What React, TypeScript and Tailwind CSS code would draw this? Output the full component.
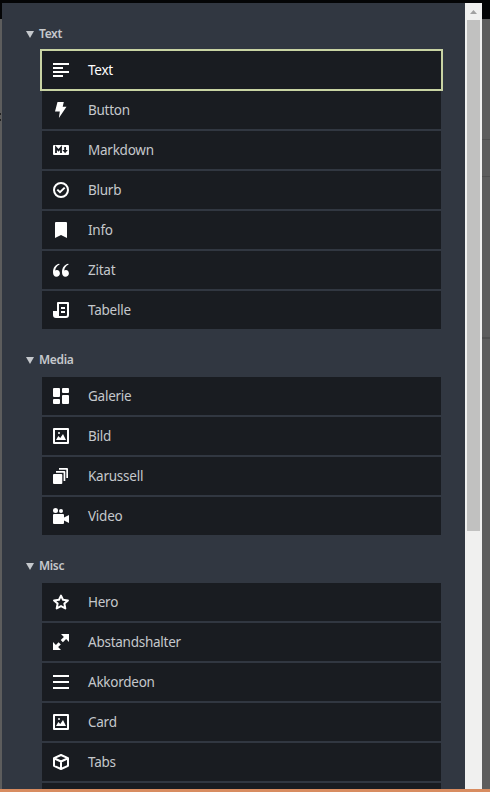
import React from "react";

const icons: Record<string, React.ReactNode> = {
  text: <path d="M0 1h16v2H0zM0 5h10v2H0zM0 9h16v2H0zM0 13h10v2H0z" />,
  bolt: <path d="M4.500 0h6.300L9.700 4.800h3.800L5.900 16l.9-6.600H2z" />,
  markdown: (
    <>
      <rect y="3" width="16" height="10" rx="1" />
      <path d="M3 11V5.6L5.5 8.4 8 5.6V11" fill="none" stroke="#191c22" strokeWidth="1.8" />
      <path d="M11.2 5h1.8v3h1.8l-2.700 3.200L9.400 8h1.800z" fill="#191c22" />
    </>
  ),
  check: (
    <g fill="none" stroke="currentColor" strokeWidth="2">
      <circle cx="8" cy="8" r="7" />
      <path d="M4.300 7.600 7 10.200l4.700-4.600" />
    </g>
  ),
  bookmark: <path d="M3 0h10a1 1 0 0 1 1 1v15l-6-3-6 3V1a1 1 0 0 1 1-1z" />,
  quote: (
    <>
      <path d="M6.300 1.700C2.600 2.400 0 5.300 0 10.200c0 2.900 1.300 4.500 3.400 4.500 2 0 3.500-1.400 3.500-3.300S5.700 8.100 3.900 8.100c-.8 0-1.300.2-1.700.5C2.500 5.800 4 3.600 6.600 2.500z" />
      <path
        transform="translate(9)"
        d="M6.300 1.700C2.600 2.400 0 5.300 0 10.200c0 2.900 1.300 4.500 3.400 4.500 2 0 3.500-1.400 3.500-3.300S5.700 8.100 3.900 8.100c-.8 0-1.300.2-1.700.5C2.500 5.800 4 3.600 6.600 2.500z"
      />
    </>
  ),
  table: (
    <path
      fillRule="evenodd"
      d="M5 0h10a1 1 0 0 1 1 1v12a3 3 0 0 1-3 3H3a3 3 0 0 1-3-3V9h4V1a1 1 0 0 1 1-1zM6 2v12h7a1 1 0 0 0 1-1V2zM8 5h4v2H8zM8 9h4v2H8z"
    />
  ),
  dashboard: (
    <>
      <rect width="7" height="9" rx="1" />
      <rect y="11" width="7" height="5" rx="1" />
      <rect x="9" width="7" height="5" rx="1" />
      <rect x="9" y="7" width="7" height="9" rx="1" />
    </>
  ),
  image: (
    <>
      <path fillRule="evenodd" d="M1 0h14a1 1 0 0 1 1 1v14a1 1 0 0 1-1 1H1a1 1 0 0 1-1-1V1a1 1 0 0 1 1-1zM2 2v12h12V2z" />
      <path d="M3 12 5.300 8l2 2L10 6l3 6z" />
      <circle cx="6" cy="5" r="1" />
    </>
  ),
  copy: (
    <>
      <rect y="6" width="9.300" height="10" rx="1" />
      <path d="M3 3h8.300a1 1 0 0 1 1 1v9h-1.700V4.700H3zM6 0h8a1 1 0 0 1 1 1v9h-1.700V1.700H6z" />
    </>
  ),
  video: (
    <>
      <circle cx="2.500" cy="2.500" r="2.500" />
      <circle cx="8" cy="3" r="2" />
      <path d="M1 6h9a1 1 0 0 1 1 1v2.500L16 7v8l-5-2.500V15a1 1 0 0 1-1 1H1a1 1 0 0 1-1-1V7a1 1 0 0 1 1-1z" />
    </>
  ),
  star: (
    <path
      d="m8 1.600 2 4.200 4.900.6-3.500 3.200.9 4.800L8 12.100l-4.300 2.300.9-4.800L1.100 6.400 6 5.800z"
      fill="none"
      stroke="currentColor"
      strokeWidth="2"
      strokeLinejoin="round"
    />
  ),
  expand: (
    <>
      <path d="M8 0h8v8l-2.900-2.900-3.200 3.200-2.200-2.200 3.200-3.200z" />
      <path d="M0 8l2.900 2.900 2.700-2.700 2.200 2.200-2.700 2.700L8 16H0z" />
    </>
  ),
  menu: <path d="M0 1h16v2H0zM0 7h16v2H0zM0 13h16v2H0z" />,
  cube: (
    <g fill="none" stroke="currentColor" strokeWidth="2" strokeLinejoin="round">
      <path d="M8 1 15 4.200v7.600L8 15l-7-3.200V4.200z" />
      <path d="m1.500 4.500 6.500 3 6.500-3M8 7.500V15" />
    </g>
  ),
};

type Item = { icon: string; label: string; active?: boolean };

const groups: { title: string; items: Item[] }[] = [
  {
    title: "Text",
    items: [
      { icon: "text", label: "Text", active: true },
      { icon: "bolt", label: "Button" },
      { icon: "markdown", label: "Markdown" },
      { icon: "check", label: "Blurb" },
      { icon: "bookmark", label: "Info" },
      { icon: "quote", label: "Zitat" },
      { icon: "table", label: "Tabelle" },
    ],
  },
  {
    title: "Media",
    items: [
      { icon: "dashboard", label: "Galerie" },
      { icon: "image", label: "Bild" },
      { icon: "copy", label: "Karussell" },
      { icon: "video", label: "Video" },
    ],
  },
  {
    title: "Misc",
    items: [
      { icon: "star", label: "Hero" },
      { icon: "expand", label: "Abstandshalter" },
      { icon: "menu", label: "Akkordeon" },
      { icon: "image", label: "Card" },
      { icon: "cube", label: "Tabs" },
      { icon: "", label: "" },
    ],
  },
];

function Row({ item }: { item: Item }) {
  return (
    <li
      className={`flex h-[38px] shrink-0 items-center bg-[#191c21] pl-[11px] ${
        item.active ? "text-white outline-2 outline-[#c8d3a3]" : "text-[#c5c8cc]"
      }`}
    >
      <svg viewBox="0 0 16 16" className="size-4 shrink-0 text-white" fill="currentColor">
        {icons[item.icon]}
      </svg>
      <span className="ml-[19px] text-[13.5px] leading-5 tracking-[-0.25px]">{item.label}</span>
    </li>
  );
}

export default function App() {
  return (
    <div className="flex h-[792px] w-[490px] flex-col overflow-hidden bg-[#5d5d5d] font-['Noto_Sans','Open_Sans',sans-serif]">
      <div className="h-[3px] shrink-0 bg-[#040506]" />
      <div className="flex h-[786px] shrink-0">
        <div className="w-0.5 shrink-0">
          <div className="h-4 bg-[#040506]" />
          <div className="mt-[94px] h-0.5 w-px bg-[#222222]" />
          <div className="mt-1 h-0.5 w-px bg-[#222222]" />
        </div>
        <main className="h-full w-[463px] shrink-0 overflow-hidden bg-[#313741] pl-6 pr-6 pt-[21px]">
          {groups.map((g) => (
            <section key={g.title} className="mb-[21px]">
              <h2 className="flex h-[27px] items-start text-xs leading-5 font-semibold tracking-[-0.35px] text-[#c5c8cc]">
                <svg viewBox="0 0 8 7" className="mt-[7px] mr-[5px] h-[7px] w-2" fill="currentColor">
                  <path d="M0 0h8L4 7z" />
                </svg>
                <span>{g.title}</span>
              </h2>
              <ul className="ml-4 flex flex-col gap-0.5">
                {g.items.map((item, i) => (
                  <Row key={i} item={item} />
                ))}
              </ul>
            </section>
          ))}
        </main>
        <div className="flex w-[17px] shrink-0 flex-col items-center bg-[#f0f0ef]">
          <div className="flex h-[17px] w-full shrink-0 items-center justify-center">
            <svg viewBox="0 0 7 4" className="h-1 w-[7px]" fill="#a1a1a1">
              <path d="M0 4 3.500 0 7 4z" />
            </svg>
          </div>
          <div className="h-[511px] w-[13px] bg-[#c1c1c0]" />
        </div>
        <div className="flex w-2 shrink-0 flex-col">
          <div className="h-4 bg-[#040506]" />
          <div className="h-[121px] border-b border-[#505050]" />
          <div className="h-[37px] border-b border-[#505050]" />
          <div className="h-[162px] border-b-2 border-[#505050]" />
        </div>
      </div>
      <div className="h-[3px] shrink-0 bg-[#d88c60]" />
    </div>
  );
}
